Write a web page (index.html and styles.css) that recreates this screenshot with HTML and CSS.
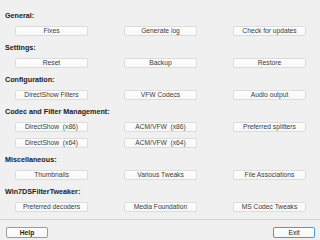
FILE: index.html
```html
<!DOCTYPE html>
<html lang="en">
<head>
    <meta charset="UTF-8">
    <title>Codec Tweak Tool</title>
    <link rel="stylesheet" href="styles.css">
</head>
<body>

    <div class="panel">
        <div class="group">
            <h2>General:</h2>
            <div class="btn-grid">
                <button>Fixes</button>
                <button>Generate log</button>
                <button>Check for updates</button>
            </div>
        </div>

        <div class="group">
            <h2>Settings:</h2>
            <div class="btn-grid">
                <button>Reset</button>
                <button>Backup</button>
                <button>Restore</button>
            </div>
        </div>

        <div class="group">
            <h2>Configuration:</h2>
            <div class="btn-grid">
                <button>DirectShow Filters</button>
                <button>VFW Codecs</button>
                <button>Audio output</button>
            </div>
        </div>

        <div class="group">
            <h2>Codec and Filter Management:</h2>
            <div class="btn-grid">
                <button>DirectShow&nbsp;&nbsp;(x86)</button>
                <button>ACM/VFW&nbsp;&nbsp;(x86)</button>
                <button>Preferred splitters</button>
                <button>DirectShow&nbsp;&nbsp;(x64)</button>
                <button>ACM/VFW&nbsp;&nbsp;(x64)</button>
            </div>
        </div>

        <div class="group">
            <h2>Miscellaneous:</h2>
            <div class="btn-grid">
                <button>Thumbnails</button>
                <button>Various Tweaks</button>
                <button>File Associations</button>
            </div>
        </div>

        <div class="group">
            <h2>Win7DSFilterTweaker:</h2>
            <div class="btn-grid">
                <button>Preferred decoders</button>
                <button>Media Foundation</button>
                <button>MS Codec Tweaks</button>
            </div>
        </div>
    </div>

    <div class="footer">
        <button class="btn-foot">Help</button>
        <button class="btn-foot default">Exit</button>
    </div>

</body>
</html>
```

FILE: styles.css
```css
body {
    margin: 0;
    width: 320px;
    height: 240px;
    overflow: hidden;
    background: #f0f0f0;
    font-family: "Liberation Sans", Arial, sans-serif;
    color: #222;
}
.panel { padding: 11px 0 0 5px; }
.group h2 {
    margin: 0;
    height: 10px;
    line-height: 10px;
    font-size: 7.2px;
    font-weight: bold;
    color: #1a1a1a;
}
.btn-grid {
    display: grid;
    grid-template-columns: repeat(3, 73px);
    column-gap: 36px;
    row-gap: 6px;
    margin: 5px 0 7px 10px;
}
button {
    height: 10px;
    padding: 0;
    border: 1px solid #dcdcdc;
    border-radius: 2px;
    background: linear-gradient(#fefefe, #f7f7f7);
    font-family: "Liberation Sans", Arial, sans-serif;
    font-size: 6.7px;
    line-height: 8px;
    color: #3a3a3a;
    white-space: nowrap;
}
.footer {
    display: flex;
    justify-content: space-between;
    margin-top: 7px;
    padding: 7px 5px 0 6px;
    border-top: 1px solid #d6d6d6;
}
.btn-foot {
    width: 42px;
    height: 11px;
    border-color: #9a9a9a;
    font-weight: bold;
    color: #222;
}
.btn-foot.default {
    border-color: #4a9ad8;
    font-weight: normal;
}
```
